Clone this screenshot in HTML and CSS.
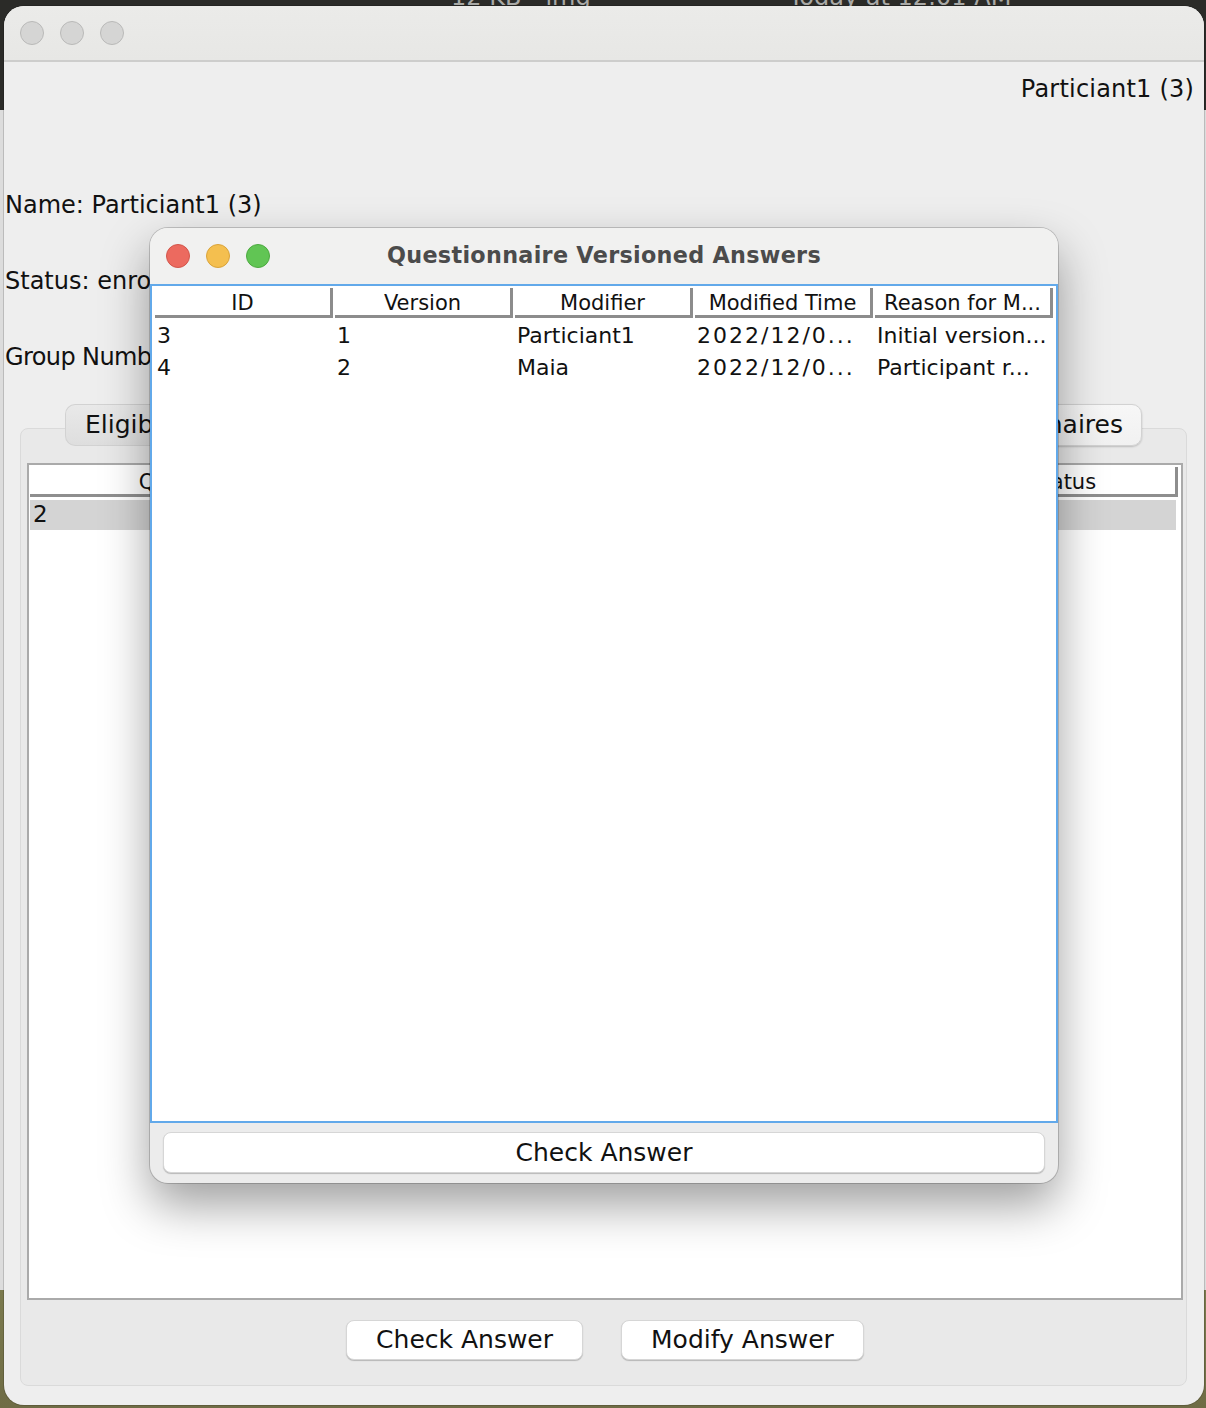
FILE: index.html
```html
<!DOCTYPE html>
<html lang="en">
<head>
<meta charset="utf-8">
<title>Questionnaire Versioned Answers</title>
<link rel="stylesheet" href="styles.css">
</head>
<body>
<div class="desktop">
  <div class="topstrip">
    <span class="ts-size">12 KB</span>
    <span class="ts-kind">img</span>
    <span class="ts-date">Today at 12:01 AM</span>
  </div>
  <div class="window">
    <div class="titlebar">
      <span class="light gray"></span>
      <span class="light gray"></span>
      <span class="light gray"></span>
    </div>
    <div class="content">
      <div class="userline">Particiant1 (3)</div>
      <div class="info">
        <div class="info-row">Name: Particiant1 (3)</div>
        <div class="info-row">Status: enrolled</div>
        <div class="info-row tight">Group Number: 1</div>
      </div>
      <div class="tabarea">
        <div class="tabs">
          <div class="tab tab-first">Eligibility</div>
          <div class="tab">Consent</div>
          <div class="tab">Visits</div>
          <div class="tab tab-last">Questionnaires</div>
        </div>
        <div class="tabpane">
          <div class="maintable">
            <div class="mt-head">
              <div class="mt-hcell first">QID</div>
              <div class="mt-hcell">Name</div>
              <div class="mt-hcell">Version</div>
              <div class="mt-hcell">Time</div>
              <div class="mt-hcell">Status</div>
            </div>
            <div class="mt-row selected">
              <div class="mt-cell">2</div>
              <div class="mt-cell"></div>
              <div class="mt-cell"></div>
              <div class="mt-cell"></div>
              <div class="mt-cell"></div>
            </div>
          </div>
          <div class="actions">
            <button class="btn">Check Answer</button>
            <button class="btn">Modify Answer</button>
          </div>
        </div>
      </div>
    </div>
  </div>

  <div class="dialog">
    <div class="dtitlebar">
      <div class="lights">
        <span class="light red"></span>
        <span class="light yellow"></span>
        <span class="light green"></span>
      </div>
      <div class="dtitle">Questionnaire Versioned Answers</div>
      <div></div>
    </div>
    <div class="dtable">
      <div class="dt-head">
        <div class="dt-hcell">ID</div>
        <div class="dt-hcell">Version</div>
        <div class="dt-hcell">Modifier</div>
        <div class="dt-hcell">Modified Time</div>
        <div class="dt-hcell">Reason for M...</div>
      </div>
      <div class="dt-row">
        <div class="dt-cell">3</div>
        <div class="dt-cell">1</div>
        <div class="dt-cell">Particiant1</div>
        <div class="dt-cell wide">2022/12/0...</div>
        <div class="dt-cell">Initial version...</div>
      </div>
      <div class="dt-row">
        <div class="dt-cell">4</div>
        <div class="dt-cell">2</div>
        <div class="dt-cell">Maia</div>
        <div class="dt-cell wide">2022/12/0...</div>
        <div class="dt-cell">Participant r...</div>
      </div>
    </div>
    <div class="dfooter">
      <button class="btn dbtn">Check Answer</button>
    </div>
  </div>
</div>
</body>
</html>
```
FILE: styles.css
```css
* { box-sizing: border-box; }

html, body {
  margin: 0;
  padding: 0;
}

body {
  width: 1206px;
  height: 1408px;
  overflow: hidden;
  font-family: "DejaVu Sans", "Liberation Sans", sans-serif;
  color: #111;
  background: linear-gradient(to bottom, #2b2b28 0, #2b2b28 110px, #dcdcdc 110px, #dcdcdc 1290px, #7b7a4e 1290px, #6f6c45 1408px);
}

.desktop {
  position: relative;
  width: 1206px;
  height: 1408px;
}

.topstrip {
  height: 6px;
  overflow: hidden;
  background: #2b2b28;
  display: flex;
  color: #a9a9a6;
  font-size: 24px;
  line-height: 16px;
}
.topstrip span { display: block; margin-top: -11px; }
.ts-size { margin-left: 451px; }
.ts-kind { margin-left: 24px; }
.ts-date { margin-left: 198px; }

.window {
  margin-left: 4px;
  width: 1200px;
  height: 1399px;
  background: #eeeeee;
  border-radius: 20px;
  overflow: hidden;
  display: flex;
  flex-direction: column;
  box-shadow: 0 0 0 1px rgba(0,0,0,0.15);
}

.titlebar {
  height: 56px;
  flex: none;
  background: linear-gradient(#ebebe9, #e7e7e5);
  border-bottom: 2px solid #cdcdcc;
  display: flex;
  align-items: center;
  gap: 16px;
  padding-left: 16px;
}

.light {
  display: block;
  width: 24px;
  height: 24px;
  border-radius: 50%;
}
.light.gray { background: #d5d5d4; border: 1px solid #b9b9b8; }
.light.red { background: #ec6a5f; border: 1px solid #d2564b; }
.light.yellow { background: #f4bf4f; border: 1px solid #d9a33a; }
.light.green { background: #61c554; border: 1px solid #4ca93f; }

.content {
  flex: 1;
  display: flex;
  flex-direction: column;
  font-size: 24px;
}

.userline {
  height: 105px;
  padding-top: 13px;
  padding-right: 10px;
  text-align: right;
  line-height: 28px;
  letter-spacing: 0.2px;
}

.info { padding-left: 1px; }
.info-row {
  height: 76px;
  line-height: 76px;
  white-space: nowrap;
}
.info-row.tight { letter-spacing: -0.6px; }

.tabarea {
  margin-top: 9px;
  padding: 0 17px 19px 16px;
  flex: 1;
  display: flex;
  flex-direction: column;
}

.tabs {
  position: relative;
  z-index: 2;
  display: flex;
  width: 1077px;
  height: 42px;
  margin: 0 0 -18px 45px;
}
.tab {
  flex: 1;
  height: 42px;
  line-height: 40px;
  font-size: 25px;
  padding: 0 18px 0 19px;
  background: linear-gradient(#e9e9e9, #dedede);
  border: 1px solid #d2d2d2;
  border-right: none;
  color: #111;
}
.tab-first { border-radius: 10px 0 0 10px; }
.tab-last {
  text-align: right;
  border-radius: 0 10px 10px 0;
  border-right: 1px solid #d2d2d2;
  background: linear-gradient(#f7f7f7, #f1f1f1);
  box-shadow: 0 1px 2px rgba(0,0,0,0.2);
}

.tabpane {
  flex: 1;
  background: #e9e9e9;
  border: 1px solid #dadada;
  border-radius: 8px;
  padding: 34px 3px 0 6px;
  display: flex;
  flex-direction: column;
}

.maintable {
  flex: 1;
  background: #fff;
  border: 2px solid #aaaaaa;
  padding: 2px 3px 0 1px;
}

.mt-head {
  display: flex;
  height: 30px;
  border-bottom: 3px solid #8e8e8e;
}
.mt-hcell {
  flex: 1;
  text-align: center;
  font-size: 21px;
  line-height: 30px;
  white-space: nowrap;
}
.mt-hcell.first { padding-left: 16px; }
.mt-hcell:last-child { border-right: 3px solid #8e8e8e; padding-left: 6px; }

.mt-row {
  display: flex;
  height: 30px;
  margin-top: 3px;
  margin-right: 2px;
}
.mt-row.selected { background: #d4d4d4; }
.mt-cell {
  flex: 1;
  padding-left: 3px;
  font-size: 23px;
  line-height: 28px;
}

.actions {
  height: 85px;
  display: flex;
  justify-content: center;
  gap: 38px;
  padding-top: 20px;
}

.btn {
  height: 40px;
  padding: 0 29px;
  font-family: "DejaVu Sans", "Liberation Sans", sans-serif;
  font-size: 25px;
  color: #111;
  background: #ffffff;
  border: 1px solid #d6d6d6;
  border-radius: 8px;
  box-shadow: 0 1px 1px rgba(0,0,0,0.22);
  line-height: 36px;
}

/* dialog */
.dialog {
  position: absolute;
  z-index: 10;
  left: 150px;
  top: 228px;
  width: 908px;
  height: 955px;
  background: #ececec;
  border-radius: 18px;
  overflow: hidden;
  display: flex;
  flex-direction: column;
  box-shadow: 0 0 0 1px rgba(0,0,0,0.18), 0 22px 48px rgba(0,0,0,0.38);
}

.dtitlebar {
  height: 56px;
  flex: none;
  background: #f1f1f0;
  display: grid;
  grid-template-columns: 1fr auto 1fr;
  align-items: center;
}
.lights {
  display: flex;
  gap: 16px;
  padding-left: 16px;
}
.dtitle {
  font-weight: bold;
  font-size: 22.3px;
  color: #4b4b4b;
  letter-spacing: 0.3px;
  padding-bottom: 2px;
}

.dtable {
  flex: 1;
  background: #fff;
  border: 2px solid #62a9ea;
  padding: 2px 0 0 3px;
}
.dt-head {
  display: flex;
  gap: 2px;
  height: 30px;
}
.dt-hcell {
  width: 178px;
  flex: none;
  text-align: center;
  font-size: 21px;
  line-height: 31px;
  border-right: 3px solid #8c8c8c;
  border-bottom: 3px solid #8c8c8c;
  white-space: nowrap;
}
.dt-row {
  display: flex;
  gap: 2px;
  height: 32px;
}
.dt-head + .dt-row { margin-top: 2px; }
.dt-cell {
  width: 178px;
  flex: none;
  padding-left: 2px;
  font-size: 22px;
  line-height: 32px;
  white-space: nowrap;
}
.dt-cell.wide { letter-spacing: 2px; }

.dfooter {
  height: 60px;
  flex: none;
  padding: 9px 13px 0 13px;
}
.dbtn {
  width: 100%;
  height: 41px;
}
```
